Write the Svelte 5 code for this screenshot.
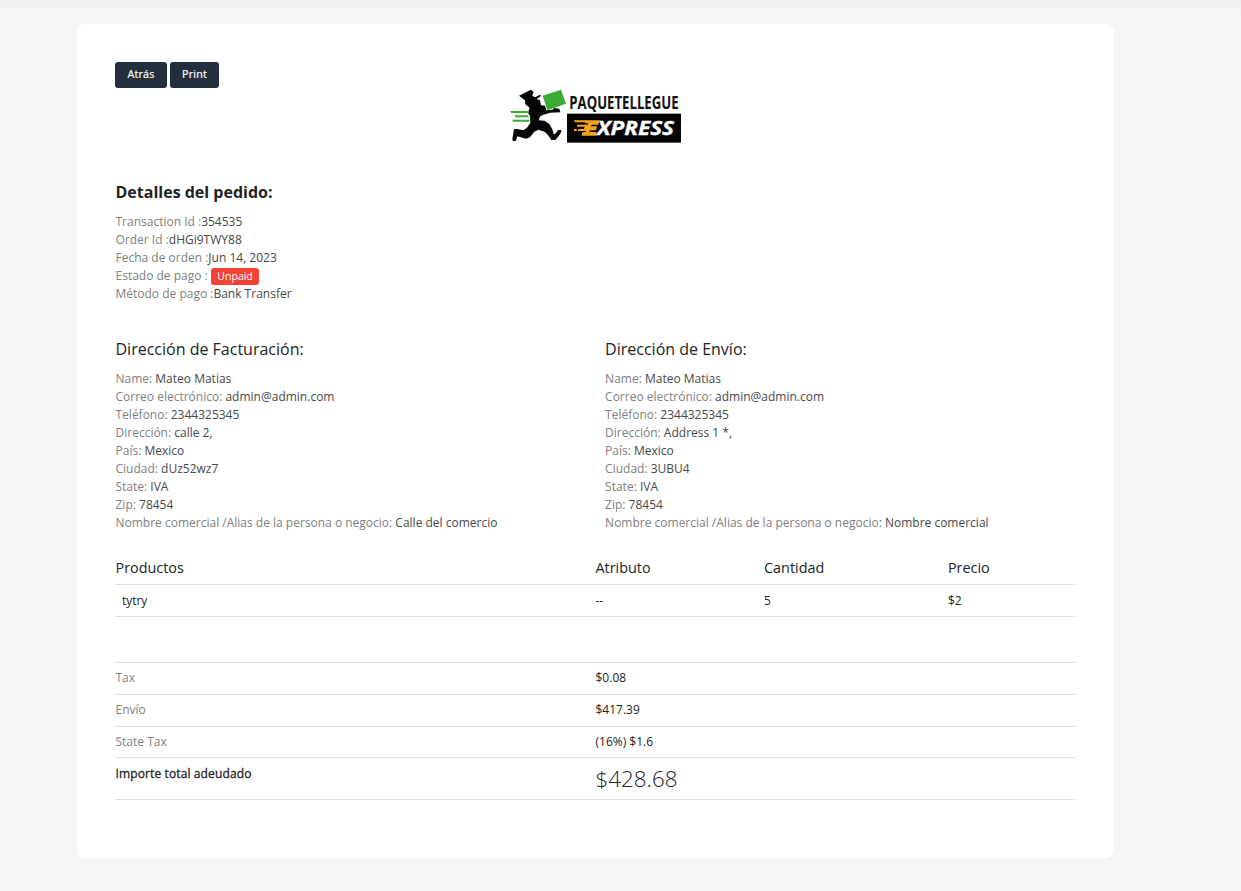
<script>
  const order = [
    ['Transaction Id :', '354535'],
    ['Order Id :', 'dHGi9TWY88'],
    ['Fecha de orden :', 'Jun 14, 2023'],
    ['Estado de pago :', 'Unpaid', true],
    ['Método de pago :', 'Bank Transfer']
  ];
  const addresses = [
    {
      title: 'Dirección de Facturación:',
      rows: [
        ['Name:', 'Mateo Matias'],
        ['Correo electrónico:', 'admin@admin.com'],
        ['Teléfono:', '2344325345'],
        ['Dirección:', 'calle 2,'],
        ['País:', 'Mexico'],
        ['Ciudad:', 'dUz52wz7'],
        ['State:', 'IVA'],
        ['Zip:', '78454'],
        ['Nombre comercial /Alias de la persona o negocio:', 'Calle del comercio']
      ]
    },
    {
      title: 'Dirección de Envío:',
      rows: [
        ['Name:', 'Mateo Matias'],
        ['Correo electrónico:', 'admin@admin.com'],
        ['Teléfono:', '2344325345'],
        ['Dirección:', 'Address 1 *,'],
        ['País:', 'Mexico'],
        ['Ciudad:', '3UBU4'],
        ['State:', 'IVA'],
        ['Zip:', '78454'],
        ['Nombre comercial /Alias de la persona o negocio:', 'Nombre comercial']
      ]
    }
  ];
  const totals = [
    ['Tax', '$0.08'],
    ['Envío', '$417.39'],
    ['State Tax', '(16%) $1.6']
  ];
</script>

<div class="page">
  <main class="card">
    <div class="actions">
      <button>Atrás</button>
      <button>Print</button>
    </div>

    <div class="brand">
      <svg width="190" height="70" viewBox="0 0 570 210" role="img" aria-label="Paquetellegue Express">
        <g fill="#050505">
          <path d="M57 47 93 29 101 36 97 47 105 52 120 44 123 48 110 57 120 61 123 76 135 77 139 91 158 89 162 84 178 86 181 97 150 98 126 106 120 110 116 121 133 122 148 132 157 148 161 161 165 163 174 150 185 151 181 161 167 179 154 180 144 165 134 155 115 149 103 155 90 172 78 176 52 169 48 182 39 184 37 177 42 148 52 147 70 151 81 143 91 129 90 108 84 99 89 83 76 73 75 61Z"/>
          <rect x="201" y="101" width="342" height="87"/>
        </g>
        <g fill="#3bab36">
          <path d="M128 47 183 29 198 71 142 91Z"/>
          <path d="M30 93h53l6 6H34ZM44 106h38l6 6H46ZM36 119h51l2 6H40Z"/>
        </g>
        <text class="wordmark" transform="translate(208 87) scale(.666 1)" textLength="492" lengthAdjust="spacingAndGlyphs">PAQUETELLEGUE</text>
        <g fill="#f9a51c">
          <path d="M221 121h38v6h-34ZM231 134h31v6h-31ZM222 147h8v6h-8ZM235 147h27v6h-29ZM246 158h8v6h-8Z"/>
          <path d="M256 121h43l-4 13h-20l-2 5h18l-3 12h-18l-2 5h22l-4 11h-41l4-11h8l3-9h-8l3-13h8l2-4h-9Z"/>
        </g>
        <text class="express" x="291" y="165" textLength="231" lengthAdjust="spacingAndGlyphs">XPRESS</text>
      </svg>
    </div>

    <section class="details">
      <h1>Detalles del pedido:</h1>
      {#each order as [label, value, badge]}
        <p>{label}{#if badge}{' '}<span class="badge">{value}</span>{:else}<span>{value}</span>{/if}</p>
      {/each}
    </section>

    <div class="addresses">
      {#each addresses as address}
        <section>
          <h2>{address.title}</h2>
          {#each address.rows as [label, value]}
            <p>{label} <span>{value}</span></p>
          {/each}
        </section>
      {/each}
    </div>

    <div class="products">
      <div class="row head"><span>Productos</span><span>Atributo</span><span>Cantidad</span><span>Precio</span></div>
      <div class="row item"><span>tytry</span><span>--</span><span>5</span><span>$2</span></div>
    </div>

    <div class="totals">
      {#each totals as [label, value]}
        <div class="row"><span class="muted">{label}</span><span>{value}</span></div>
      {/each}
      <div class="row grand"><strong>Importe total adeudado</strong><span class="amount">$428.68</span></div>
    </div>
  </main>
</div>

<style>
  :global(body) { margin: 0; background: #f4f5f7; }
  * { box-sizing: border-box; }
  .page {
    height: 891px;
    padding: 24px 127px 33px 77px;
    background: linear-gradient(#eff0f2, #f4f5f7 16px);
    font-family: "Open Sans", sans-serif;
    font-size: 12px;
    line-height: 18px;
    color: #232323;
  }
  .card { height: 834px; padding: 38px; border-radius: 8px; background: #fff; }
  .actions { display: flex; gap: 3px; height: 18px; }
  button {
    width: 52px;
    height: 26px;
    padding: 0 0 2px;
    border: 0;
    border-radius: 3px;
    background: #232e3e;
    color: #fff;
    font: 400 10.8px/24px "Open Sans", sans-serif;
    letter-spacing: 0.2px;
    -webkit-text-stroke: 0.2px #fff;
  }
  button + button { width: 49px; }
  .brand { display: flex; justify-content: center; height: 70px; }
  .brand svg { position: relative; left: -0.5px; overflow: visible; }
  .wordmark { font: 700 56px "Open Sans", sans-serif; fill: #111; }
  .express { font: italic 700 56px "Open Sans", sans-serif; fill: #fff; stroke: #fff; stroke-width: 1; }
  .details { height: 187px; padding: 30px 0 0 0.5px; }
  h1, h2, p { margin: 0; }
  h1 { height: 33px; font-size: 16px; line-height: 24px; font-weight: 700; }
  h2 { height: 33px; font-size: 16px; line-height: 24px; font-weight: 400; }
  p { height: 18px; color: #808080; white-space: nowrap; }
  p span { color: #484848; }
  p .badge {
    display: inline-block;
    height: 17px;
    padding: 0 6.5px;
    border-radius: 3px;
    background: #f44336;
    color: #fff;
    font-size: 10.5px;
    line-height: 17px;
    vertical-align: top;
    margin-top: 1px;
  }
  .addresses { display: grid; grid-template-columns: 489.6px 1fr; height: 214px; padding-left: 0.5px; }
  .row { display: grid; grid-template-columns: 480px 168.5px 183.9px 1fr; height: 32px; padding: 7px 0 0 0.5px; border-bottom: 1px solid #e1e1e1; }
  .products { height: 111px; }
  .head { height: 34px; padding-top: 7px; font-size: 14.4px; line-height: 20px; }
  .item > :first-child { padding-left: 6.4px; }
  .totals { border-top: 1px solid #e1e1e1; }
  .totals .row { padding-top: 6px; }
  .totals .row:nth-child(3) { height: 31px; }
  .muted { color: #808080; }
  .totals .grand { height: 42px; padding-top: 7px; }
  .grand strong { font-weight: 400; letter-spacing: 0.12px; -webkit-text-stroke: 0.3px #232323; }
  .grand .amount { font-size: 22.4px; line-height: 27px; font-weight: 300; }
</style>
